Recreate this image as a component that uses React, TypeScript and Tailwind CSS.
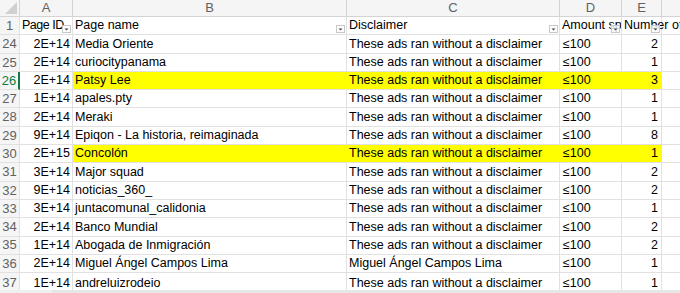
import React from "react";

const D = "These ads ran without a disclaimer";
type Row = [number, string, string, string, string, string, boolean?];
const rows: Row[] = [
  [24, "2E+14", "Media Oriente", D, "≤100", "2"],
  [25, "2E+14", "curiocitypanama", D, "≤100", "1"],
  [26, "2E+14", "Patsy Lee", D, "≤100", "3", true],
  [27, "1E+14", "apales.pty", D, "≤100", "1"],
  [28, "2E+14", "Meraki", D, "≤100", "1"],
  [29, "9E+14", "Epiqon - La historia, reimaginada", D, "≤100", "8"],
  [30, "2E+15", "Concolón", D, "≤100", "1", true],
  [31, "3E+14", "Major squad", D, "≤100", "2"],
  [32, "9E+14", "noticias_360_", D, "≤100", "2"],
  [33, "3E+14", "juntacomunal_calidonia", D, "≤100", "1"],
  [34, "2E+14", "Banco Mundial", D, "≤100", "2"],
  [35, "1E+14", "Abogada de Inmigración", D, "≤100", "2"],
  [36, "2E+14", "Miguel Ángel Campos Lima", "Miguel Ángel Campos Lima", "≤100", "1"],
  [37, "1E+14", "andreluizrodeio", D, "≤100", "1"],
];

function Filter() {
  return (
    <span className="absolute right-[1px] bottom-[1px] w-[9px] h-[8px] border border-[#c8c8c8] bg-white/80 flex items-end justify-center">
      <svg width="5" height="3" viewBox="0 0 5 3" className="mb-[1px]">
        <path d="M0.5 0.5 L2.5 2.5 L4.5 0.5 Z" fill="#444" />
      </svg>
    </span>
  );
}

const cell = "border-r border-b border-[#e1e1e1] flex items-center overflow-hidden whitespace-nowrap";
const hdr = "bg-[#f5f5f5] border-r border-b border-[#d4d4d4] flex items-center justify-center text-[#616161] text-[13px]";

export default function App() {
  return (
    <div
      className="relative w-[680px] h-[293px] overflow-hidden bg-white text-[12.5px] text-black"
      style={{ fontFamily: '"Liberation Sans", Arial, sans-serif' }}
    >
      <div className="grid grid-cols-[20px_53px_274px_213px_62px_40px_1fr] grid-rows-[17px_repeat(14,18.3px)]">
        {/* column header */}
        <div className={hdr + " relative"}>
          <svg width="12" height="12" viewBox="0 0 12 12" className="absolute right-[2px] bottom-[2px]">
            <path d="M12 0 L12 12 L0 12 Z" fill="#d0d0d0" />
          </svg>
        </div>
        <div className={hdr}>A</div>
        <div className={hdr}>B</div>
        <div className={hdr}>C</div>
        <div className={hdr}>D</div>
        <div className={hdr}>E</div>
        <div className="bg-[#f5f5f5] border-b border-[#d4d4d4]"></div>

        {/* row 1 */}
        <div className="bg-[#f5f5f5] border-r border-b border-[#e1e1e1] flex items-center justify-center text-[#616161] text-[13px]">1</div>
        <div className={cell + " relative px-[2px] tracking-[-0.5px]"}>Page ID<Filter /></div>
        <div className={cell + " relative px-[2px]"}>Page name<Filter /></div>
        <div className={cell + " relative px-[2px]"}>Disclaimer<Filter /></div>
        <div className={cell + " relative px-[2px]"}>Amount spent (USD)<Filter /></div>
        <div className="border-r border-b border-[#e1e1e1] flex items-center whitespace-nowrap relative px-[2px]">
          Number of ads in Library<Filter />
        </div>
        <div className="border-b border-[#e1e1e1]"></div>

        {rows.map(([n, id, name, disc, amt, num, y]) => (
          <React.Fragment key={n}>
            <div
              className={
                "bg-[#f5f5f5] border-b border-[#e1e1e1] flex items-center justify-center text-[13px] " +
                (n === 26 ? "text-[#0f7b3f] border-r-2 border-r-[#107c41]" : "text-[#616161] border-r")
              }
            >
              {n}
            </div>
            <div className={cell + " justify-end px-[2px]"}>{id}</div>
            <div className={cell + " px-[2px] " + (y ? "bg-[#ffff00] border-r-[#ffff00]" : "")}>{name}</div>
            <div className={cell + " px-[2px] " + (y ? "bg-[#ffff00] border-r-[#ffff00]" : "")}>{disc}</div>
            <div className={cell + " px-[3px] " + (y ? "bg-[#ffff00] border-r-[#ffff00]" : "")}>{amt}</div>
            <div className={cell + " justify-end px-[3px] " + (y ? "bg-[#ffff00]" : "")}>{num}</div>
            <div className="border-b border-[#e1e1e1]"></div>
          </React.Fragment>
        ))}
      </div>
      <div className="absolute left-0 right-0 bottom-0 h-[3px] bg-[#e6e6e6] flex">
        <div className="w-[52px] h-full bg-[#f0f0f0]"></div>
      </div>
    </div>
  );
}
